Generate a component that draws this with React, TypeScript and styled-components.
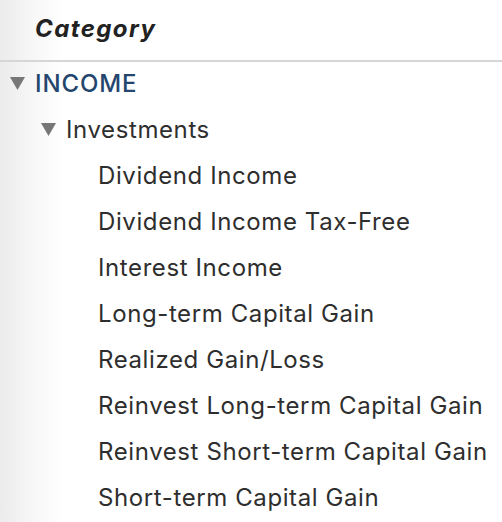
import React from "react";
import styled, { createGlobalStyle } from "styled-components";

const Global = createGlobalStyle`
  html, body { margin: 0; padding: 0; background: #fff; }
  body { font-family: Inter, "Helvetica Neue", Arial, sans-serif; -webkit-font-smoothing: antialiased; }
`;

const Panel = styled.div`
  width: 502px;
  height: 522px;
  overflow: hidden;
  background: linear-gradient(to right, #ebebeb 0px, #f6f6f6 30px, #ffffff 62px);
  display: flex;
  flex-direction: column;
`;

const Header = styled.div`
  height: 62px;
  flex: none;
  display: flex;
  align-items: center;
  padding-left: 35px;
  padding-bottom: 4px;
  border-bottom: 2px solid #d6d6d6;
  box-sizing: border-box;
  font-size: 24px;
  font-weight: 700;
  font-style: italic;
  letter-spacing: 1.4px;
  color: #222;
`;

const List = styled.div`
  display: flex;
  flex-direction: column;
`;

const Row = styled.div<{ $indent: number }>`
  height: 46px;
  flex: none;
  box-sizing: border-box;
  padding-bottom: 4px;
  display: flex;
  align-items: center;
  padding-left: ${(p) => p.$indent}px;
  font-size: 24px;
  letter-spacing: 0.6px;
  color: #2e2e2e;
  white-space: nowrap;
`;

const Label = styled.span<{ $group?: boolean }>`
  color: ${(p) => (p.$group ? "#24466e" : "#2e2e2e")};
  font-weight: ${(p) => (p.$group ? 500 : 400)};
  letter-spacing: ${(p) => (p.$group ? "0.9px" : "inherit")};
`;

const Toggle = styled.svg`
  width: 15px;
  height: 13px;
  margin-right: 10px;
  flex: none;
`;

const Tri = () => (
  <Toggle viewBox="0 0 15 13">
    <polygon points="0,0 15,0 7.5,13" fill="#777" />
  </Toggle>
);

const items = [
  "Dividend Income",
  "Dividend Income Tax-Free",
  "Interest Income",
  "Long-term Capital Gain",
  "Realized Gain/Loss",
  "Reinvest Long-term Capital Gain",
  "Reinvest Short-term Capital Gain",
  "Short-term Capital Gain",
];

export default function App() {
  return (
    <>
      <Global />
      <Panel>
        <Header>Category</Header>
        <List>
          <Row $indent={10}>
            <Tri />
            <Label $group>INCOME</Label>
          </Row>
          <Row $indent={41}>
            <Tri />
            <Label>Investments</Label>
          </Row>
          {items.map((t) => (
            <Row key={t} $indent={98}>
              <Label>{t}</Label>
            </Row>
          ))}
        </List>
      </Panel>
    </>
  );
}
